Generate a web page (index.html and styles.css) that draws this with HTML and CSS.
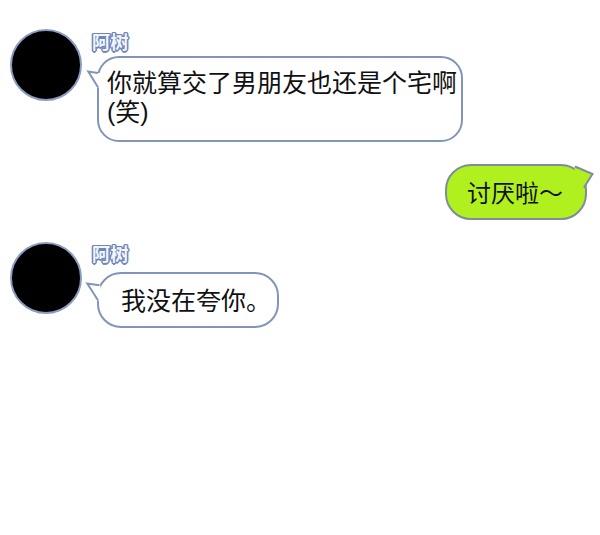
FILE: index.html
```html
<!DOCTYPE html>
<html lang="zh">
<head>
<meta charset="utf-8">
<title>Chat</title>
<link rel="stylesheet" href="styles.css">
</head>
<body>
<div class="chat">
  <div class="row left r1">
    <div class="avatar"></div>
    <div class="col">
      <div class="name">阿树</div>
      <div class="bubble white b1">你就算交了男朋友也还是个宅啊<br>(笑)
        <svg class="tail tail-left" width="16" height="24" viewBox="0 0 16 24"><path class="tf" d="M3.3 3.5 L15 5.2 L15 19.5 L12.5 19.5 Z"/><path class="ts" d="M13 5 L3.3 3.5 L13 19.2"/></svg>
      </div>
    </div>
  </div>
  <div class="row right r2">
    <div class="bubble green b2">讨厌啦～
      <svg class="tail tail-right" width="24" height="28" viewBox="0 0 24 28"><path class="tf" d="M3.5 3.2 L21.5 11 L13 25 L3.5 25 Z"/><path class="ts" d="M4 3.5 L21.5 11 L13 24.5"/></svg>
    </div>
  </div>
  <div class="row left r3">
    <div class="avatar"></div>
    <div class="col">
      <div class="name">阿树</div>
      <div class="bubble white b3">我没在夸你。
        <svg class="tail tail-left" width="16" height="24" viewBox="0 0 16 24"><path class="tf" d="M2.3 3.5 L15.5 5.5 L15.5 20.5 L12.5 20.5 Z"/><path class="ts" d="M14.5 5.2 L2.3 3.5 L13 20.2"/></svg>
      </div>
    </div>
  </div>
</div>
</body>
</html>
```
FILE: styles.css
```css
html, body {
  margin: 0;
  padding: 0;
  background: #ffffff;
}
body {
  width: 600px;
  height: 535px;
  overflow: hidden;
  font-family: "Liberation Sans", "Noto Sans CJK SC", sans-serif;
  color: #111;
}
.chat {
  padding-top: 29px;
}
.row {
  display: flex;
}
.row.left {
  padding-left: 10px;
  gap: 10px;
  align-items: flex-start;
}
.row.right {
  justify-content: flex-end;
  padding-right: 13px;
  margin-top: 22px;
}
.r3 {
  margin-top: 22px;
}
.avatar {
  width: 72px;
  height: 72px;
  box-sizing: border-box;
  border-radius: 50%;
  background: #000;
  border: 2.5px solid #8a9cc0;
  flex: none;
}
.col {
  display: flex;
  flex-direction: column;
  align-items: flex-start;
  padding-top: 2px;
}
.r3 .col {
  padding-top: 1px;
}
.name {
  font-family: "Noto Sans CJK SC", sans-serif;
  font-size: 18px;
  line-height: 20px;
  height: 20px;
  font-weight: 700;
  letter-spacing: 0.5px;
  color: #f3f6fc;
  text-shadow:
    1px 0 0 #6f86b8, -1px 0 0 #6f86b8, 0 1px 0 #6f86b8, 0 -1px 0 #6f86b8,
    1px 1px 0 #6f86b8, -1px -1px 0 #6f86b8, 1px -1px 0 #6f86b8, -1px 1px 0 #6f86b8,
    1.5px 0 0 #6f86b8, -1.5px 0 0 #6f86b8, 0 1.5px 0 #6f86b8, 0 -1.5px 0 #6f86b8;
}
.bubble {
  position: relative;
  box-sizing: border-box;
  white-space: nowrap;
}
.white {
  background: #fff;
  border: 2px solid #8295b9;
  margin-left: 5px;
  font-size: 25px;
}
.b1 {
  border-radius: 22px;
  width: 366px;
  height: 86px;
  margin-top: 5px;
  padding: 11px 4px 0 8px;
  line-height: 29px;
}
.b3 {
  border-radius: 24px;
  width: 182px;
  height: 56px;
  margin-top: 9px;
  padding: 12px 6px 0 22px;
  line-height: 30px;
}
.green {
  background: #aff01e;
  border: 2px solid #7f8c9c;
  border-radius: 26px;
  width: 142px;
  height: 56px;
  padding: 14px 0 0 20px;
  font-size: 24px;
  line-height: 28px;
}
.tail {
  position: absolute;
  overflow: visible;
}
.tail-left {
  left: -14px;
}
.b1 .tail-left { top: 10px; }
.b3 .tail-left { top: 6px; }
.tail-right {
  right: -10px;
  top: -3px;
}
.white .tf { fill: #fff; }
.white .ts { fill: none; stroke: #8295b9; stroke-width: 2; stroke-linejoin: miter; }
.green .tf { fill: #aff01e; }
.green .ts { fill: none; stroke: #7f8c9c; stroke-width: 2; stroke-linejoin: miter; }
```
